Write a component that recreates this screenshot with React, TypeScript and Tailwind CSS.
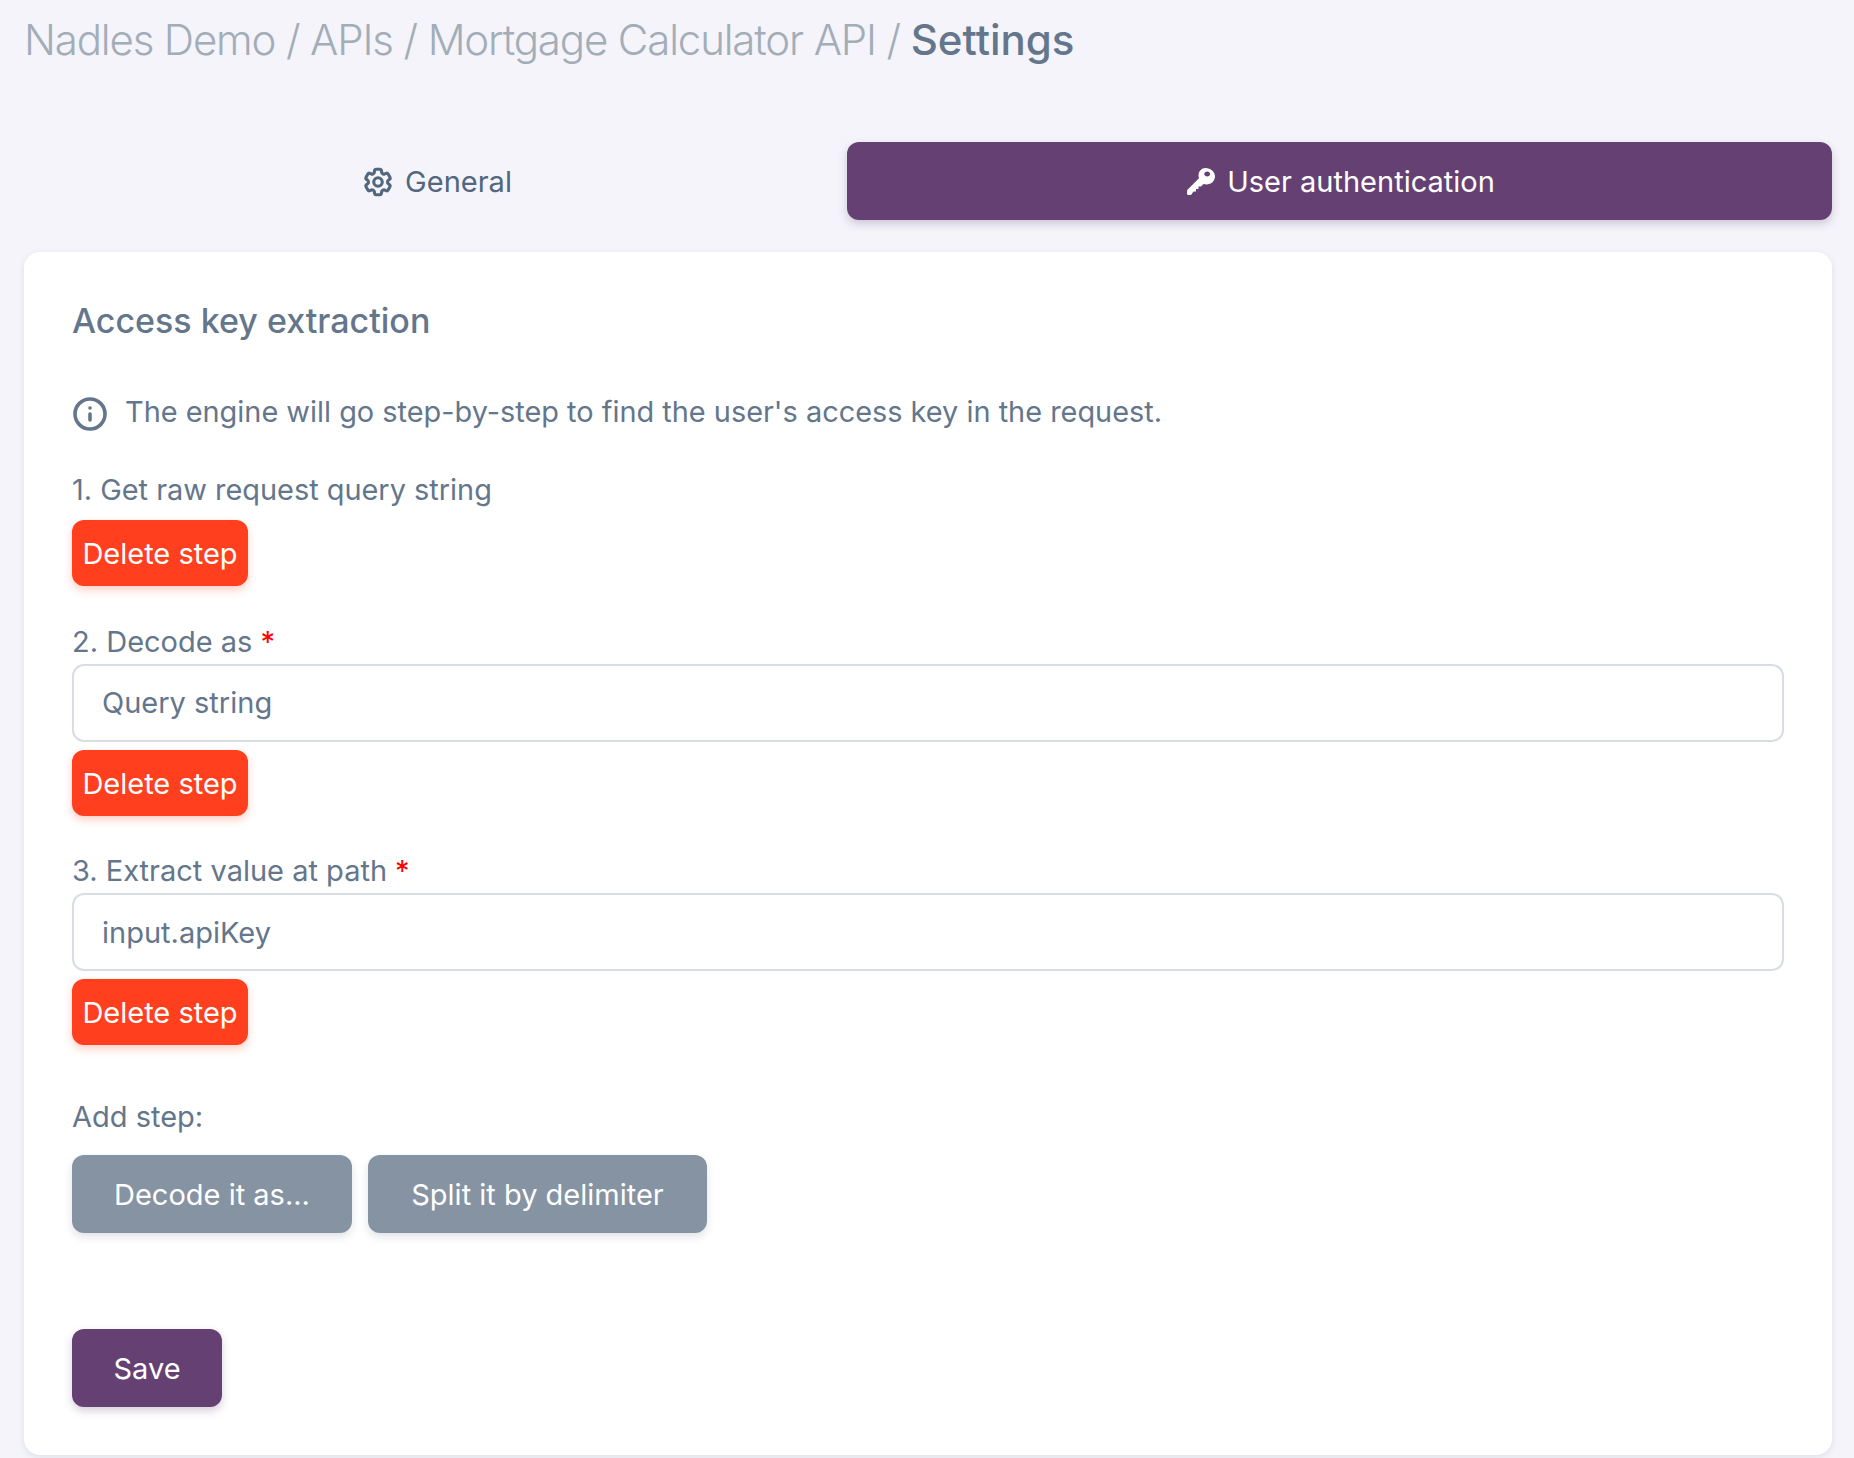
import { Info } from "lucide-react";
import { HiOutlineCog6Tooth } from "react-icons/hi2";

type StepProps = {
  label: string;
  value?: string;
};

function DeleteButton() {
  return (
    <button className="block h-[66px] w-[176px] rounded-xl bg-[#ff3f1d] pt-[1px] text-center text-[29px] leading-[66px] text-white shadow-[0_4px_8px_rgba(255,63,29,0.25)]">
      Delete step
    </button>
  );
}

function Step({ label, value }: StepProps) {
  return (
    <div className="mt-[36.5px]">
      <div className="h-[38px] text-[29px] leading-[38px]">
        {label}
        <span className="ml-2 text-[#ff0000]">*</span>
      </div>
      <div className="mt-[3px] flex h-[78px] items-center rounded-xl border-2 border-[#d8dde3] px-[28px] pt-[1px] text-[29px]">
        {value}
      </div>
      <div className="mt-[8px]">
        <DeleteButton />
      </div>
    </div>
  );
}

function KeyIcon() {
  return (
    <svg width="30" height="30" viewBox="0 0 30 30" fill="none">
      <path
        fillRule="evenodd"
        clipRule="evenodd"
        fill="#ffffff"
        d="M19.5 1C24.7 1 29 4.8 29 9.5c0 4.4-3.9 8-8.6 8-1 0-2-.2-2.9-.5L15 19.5h-2.5V22H10v2.5H7.5L5 28H1.8L1 27l.2-4L13 11.2c-.4-1-.5-1.8-.5-2.7C12.5 4.4 15.6 1 19.5 1Zm1.7 3.4c-1.6 0-2.9 1.1-2.9 2.5s1.3 2.5 2.9 2.5 2.9-1.1 2.9-2.5-1.3-2.5-2.9-2.5Z"
      />
    </svg>
  );
}

function App() {
  return (
    <div className="h-[1458px] overflow-hidden bg-[#f4f4fa] pr-[22px] pl-[24px] font-['Inter',sans-serif] text-[#64768b]">
      <h1 className="h-[142px] pt-[14px] text-[42px] leading-[52px] font-light tracking-[-1.15px] text-[#a3adb8]">
        Nadles Demo / APIs / Mortgage Calculator API /{" "}
        <span className="font-medium tracking-normal text-[#64768b]">Settings</span>
      </h1>

      <div className="flex h-[78px] text-[29px]">
        <div className="flex w-[823px] items-center justify-center gap-[10px] pt-[1px] pl-[2px] text-[#52667e]">
          <HiOutlineCog6Tooth size={34} strokeWidth={2.2} />
          General
        </div>
        <div className="flex flex-1 items-center justify-center gap-[11px] rounded-xl bg-[#654173] pt-[1px] pl-[2px] text-white shadow-[0_4px_8px_rgba(101,65,115,0.25)]">
          <KeyIcon />
          User authentication
        </div>
      </div>

      <div className="mt-[32px] h-[1203px] rounded-2xl bg-white px-[48px] pt-[49px] shadow-[0_2px_6px_rgba(98,116,137,0.15)]">
        <h2 className="text-[34px] leading-[40px] font-medium">Access key extraction</h2>

        <div className="mt-[51px] flex h-[40px] items-center gap-[17px] text-[28.9px]">
          <Info size={36} strokeWidth={2.4} className="mt-[3px]" />
          The engine will go step-by-step to find the user's access key in the request.
        </div>

        <div className="mt-[39px] h-[38px] text-[28.9px] leading-[38px]">1. Get raw request query string</div>
        <div className="mt-[11px]">
          <DeleteButton />
        </div>

        <Step label="2. Decode as" value="Query string" />
        <Step label="3. Extract value at path" value="input.apiKey" />

        <div className="mt-[53px] h-[38px] text-[29px] leading-[38px]">Add step:</div>
        <div className="mt-[19px] flex gap-[16px]">
          <button className="h-[78px] w-[280px] rounded-xl bg-[#8693a2] pt-[1px] text-[29px] text-white shadow-[0_4px_8px_rgba(98,116,137,0.2)]">
            Decode it as...
          </button>
          <button className="h-[78px] w-[339px] rounded-xl bg-[#8693a2] pt-[1px] text-[29px] text-white shadow-[0_4px_8px_rgba(98,116,137,0.2)]">
            Split it by delimiter
          </button>
        </div>

        <button className="mt-[96px] h-[78px] w-[150px] rounded-xl bg-[#654173] pt-[1px] text-[29px] text-white shadow-[0_4px_8px_rgba(101,65,115,0.25)]">
          Save
        </button>
      </div>
    </div>
  );
}

export default App;
